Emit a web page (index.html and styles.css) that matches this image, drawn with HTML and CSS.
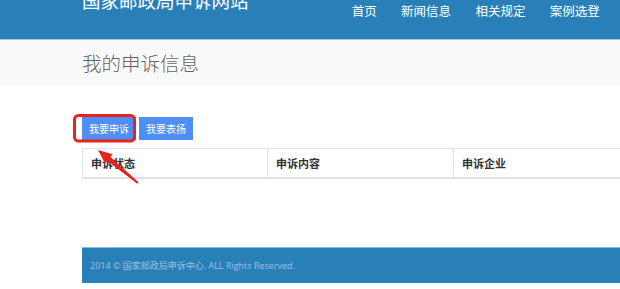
FILE: index.html
```html
<!DOCTYPE html>
<html lang="zh-CN">
<head>
<meta charset="utf-8">
<title>我的申诉信息</title>
<link rel="stylesheet" href="styles.css">
</head>
<body>
<header class="topbar">
  <div class="brand">国家邮政局申诉网站</div>
  <nav class="nav">
    <a class="nav-link">首页</a>
    <a class="nav-link">新闻信息</a>
    <a class="nav-link">相关规定</a>
    <a class="nav-link">案例选登</a>
  </nav>
</header>
<div class="title-band">
  <h1 class="page-title">我的申诉信息</h1>
</div>
<main class="content">
  <div class="btn-row">
    <button class="btn">我要申诉</button>
    <button class="btn">我要表扬</button>
  </div>
  <table class="grid">
    <thead>
      <tr>
        <th class="col1">申诉状态</th>
        <th class="col2">申诉内容</th>
        <th class="col3">申诉企业</th>
      </tr>
    </thead>
  </table>
  <footer class="footer">2014 © 国家邮政局申诉中心. ALL Rights Reserved.</footer>
</main>
<svg class="annot" width="620" height="289" viewBox="0 0 620 289">
  <rect x="74.5" y="115.5" width="60" height="25.5" rx="4" fill="none" stroke="#e8231c" stroke-width="3"/>
  <polygon fill="#e8231c" points="98,150 112.6,154.3 110.4,157.0 138.6,182.2 137.4,183.8 107.2,160.8 105.0,163.5"/>
</svg>
</body>
</html>
```

FILE: styles.css
```css
* { box-sizing: border-box; }
html, body { margin: 0; padding: 0; }
body {
  width: 620px;
  height: 289px;
  overflow: hidden;
  position: relative;
  background: #fff;
  font-family: "Open Sans", "Noto Sans CJK SC", sans-serif;
  color: #333;
}
.topbar {
  height: 40px;
  background: #2980b9;
  border-bottom: 1px solid #a6c8e2;
  display: flex;
  justify-content: space-between;
  align-items: flex-start;
  padding: 0 8px 0 82px;
}
.brand {
  color: #fff;
  font-family: "Noto Sans CJK SC", sans-serif;
  font-size: 18.5px;
  line-height: 19px;
  margin-top: -9px;
  white-space: nowrap;
}
.nav {
  display: flex;
  margin-top: 2px;
}
.nav-link {
  color: #fff;
  font-family: "Noto Sans CJK SC", sans-serif;
  font-size: 12.5px;
  line-height: 18px;
  padding: 0 12.2px;
}
.title-band {
  height: 45px;
  background: #f9f9f9;
  display: flex;
  align-items: center;
  padding-left: 82px;
}
.page-title {
  margin: 0;
  font-family: "Noto Sans CJK SC", sans-serif;
  font-weight: 300;
  font-size: 19.5px;
  color: #666;
  line-height: 24px;
}
.content {
  padding: 32px 0 0 82px;
}
.btn-row {
  display: flex;
  gap: 3px;
}
.btn {
  height: 23px;
  padding: 0 7px;
  border: 0;
  margin: 0;
  background: #4f8ff5;
  color: #fff;
  font-family: "Noto Sans CJK SC", sans-serif;
  font-size: 10px;
  line-height: 23px;
}
.grid {
  margin-top: 8px;
  width: 560px;
  border-collapse: collapse;
  table-layout: fixed;
}
.grid th {
  height: 29px;
  text-align: left;
  padding: 0 8px;
  font-family: "Noto Sans CJK SC", sans-serif;
  font-size: 11px;
  font-weight: 700;
  color: #333;
  border: 1px solid #e2e2e2;
  border-bottom: 2px solid #e2e2e2;
}
.col1 { width: 185px; }
.col2 { width: 186px; }
.footer {
  margin-top: 68px;
  height: 36px;
  background: #2980b9;
  border-top: 1px solid #8ebbdc;
  padding-left: 8px;
  display: flex;
  align-items: center;
  font-size: 9px;
  color: #9fc1dc;
  white-space: nowrap;
}
.annot {
  position: absolute;
  left: 0;
  top: 0;
  pointer-events: none;
}
```
